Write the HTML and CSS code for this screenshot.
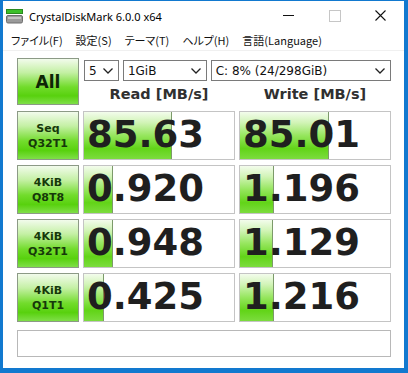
FILE: index.html
```html
<!DOCTYPE html>
<html lang="ja">
<head>
    <meta charset="UTF-8">
    <title>CrystalDiskMark 6.0.0 x64</title>
    <link rel="stylesheet" href="styles.css">
</head>
<body>
<div class="window">
    <div class="titlebar">
        <svg class="app-icon" width="17" height="15" viewBox="0 0 17 15">
            <rect x="0.5" y="0.5" width="16" height="4" fill="#3bbf2a" stroke="#2a8a1f"/>
            <rect x="0.5" y="6.5" width="16" height="7.5" rx="1.5" fill="#9a9a9a" stroke="#6f6f6f"/>
            <rect x="2" y="8" width="13" height="2" fill="#c4c4c4"/>
        </svg>
        <span class="title">CrystalDiskMark 6.0.0 x64</span>
        <div class="caption-buttons">
            <span class="cap cap-min"></span>
            <span class="cap cap-max"></span>
            <svg class="cap cap-close" width="11" height="11" viewBox="0 0 11 11">
                <path d="M0.5 0.5 L10.5 10.5 M10.5 0.5 L0.5 10.5" stroke="#111" stroke-width="1.1"/>
            </svg>
        </div>
    </div>

    <div class="menubar">
        <span class="menu-item">ファイル(F)</span>
        <span class="menu-item">設定(S)</span>
        <span class="menu-item">テーマ(T)</span>
        <span class="menu-item">ヘルプ(H)</span>
        <span class="menu-item">言語(Language)</span>
    </div>

    <div class="content">
        <div class="grid">
            <div class="btn btn-all">All</div>
            <div class="top-right">
                <div class="controls">
                    <div class="combo combo-count"><span>5</span><svg width="10" height="6" viewBox="0 0 10 6"><path d="M0.5 0.5 L5 5 L9.5 0.5" fill="none" stroke="#222" stroke-width="1.3"/></svg></div>
                    <div class="combo combo-size"><span>1GiB</span><svg width="10" height="6" viewBox="0 0 10 6"><path d="M0.5 0.5 L5 5 L9.5 0.5" fill="none" stroke="#222" stroke-width="1.3"/></svg></div>
                    <div class="combo combo-drive"><span>C: 8% (24/298GiB)</span><svg width="10" height="6" viewBox="0 0 10 6"><path d="M0.5 0.5 L5 5 L9.5 0.5" fill="none" stroke="#222" stroke-width="1.3"/></svg></div>
                </div>
                <div class="headers">
                    <div class="head">Read [MB/s]</div>
                    <div class="head">Write [MB/s]</div>
                </div>
            </div>

            <div class="btn btn-test">Seq<br>Q32T1</div>
            <div class="result"><div class="bar" style="width: 87px"></div><span class="value">85.63</span></div>
            <div class="result"><div class="bar" style="width: 88px"></div><span class="value">85.01</span></div>

            <div class="btn btn-test">4KiB<br>Q8T8</div>
            <div class="result"><div class="bar" style="width: 28px"></div><span class="value">0.920</span></div>
            <div class="result"><div class="bar" style="width: 33px"></div><span class="value">1.196</span></div>

            <div class="btn btn-test">4KiB<br>Q32T1</div>
            <div class="result"><div class="bar" style="width: 28px"></div><span class="value">0.948</span></div>
            <div class="result"><div class="bar" style="width: 32px"></div><span class="value">1.129</span></div>

            <div class="btn btn-test">4KiB<br>Q1T1</div>
            <div class="result"><div class="bar" style="width: 19px"></div><span class="value">0.425</span></div>
            <div class="result"><div class="bar" style="width: 33px"></div><span class="value">1.216</span></div>

            <div class="comment"></div>
        </div>
    </div>
</div>
</body>
</html>
```

FILE: styles.css
```css
body {
    margin: 0;
    background-color: #1279cf;
    font-family: "Noto Sans", "Noto Sans CJK JP", sans-serif;
}
.window {
    margin: 1px 4px 0 3px;
    height: 367px;
    background-color: #ffffff;
    display: flex;
    flex-direction: column;
}
.titlebar {
    height: 29px;
    display: flex;
    align-items: center;
    padding-left: 3px;
}
.app-icon {
    margin-right: 6px;
    margin-top: 2px;
}
.title {
    font-family: "Noto Sans", sans-serif;
    font-size: 11px;
    color: #000;
    margin-top: 1px;
}
.caption-buttons {
    margin-left: auto;
    display: flex;
    align-items: center;
}
.cap {
    display: block;
}
.cap-min {
    width: 11px;
    height: 1px;
    background-color: #111;
    margin-right: 35px;
}
.cap-max {
    width: 10px;
    height: 10px;
    border: 1px solid #c6c6c6;
    margin-right: 34px;
}
.cap-close {
    margin-right: 18px;
}
.menubar {
    height: 20px;
    display: flex;
    align-items: center;
    padding-left: 8px;
    border-bottom: 1px solid #f0f0f0;
    font-family: "Noto Sans CJK JP", sans-serif;
    font-feature-settings: "palt";
    font-size: 11px;
    color: #111;
}
.menu-item {
    margin-right: 13px;
}
.content {
    flex: 1;
    padding: 7px 0 0 14px;
}
.grid {
    display: grid;
    grid-template-columns: 62px 152px 152px;
    grid-template-rows: 48px repeat(4, 49px) 30px;
    column-gap: 4px;
    row-gap: 5px;
    font-family: "DejaVu Sans", Verdana, sans-serif;
}
.grid > :first-child,
.grid > .top-right {
    margin-bottom: 1px;
}
.btn {
    border: 1px solid #8c9a86;
    background: linear-gradient(to bottom, #f2fbec 0%, #c4f0a4 30%, #72dc2c 62%, #58d10e 82%, #7fdf48 100%);
    color: #16380a;
    font-weight: bold;
    display: flex;
    align-items: center;
    justify-content: center;
    text-align: center;
    box-sizing: border-box;
}
.btn-all {
    font-size: 17px;
    color: #0f2606;
}
.btn-test {
    font-size: 11px;
    line-height: 15px;
}
.top-right {
    grid-column: 2 / 4;
    display: flex;
    flex-direction: column;
}
.controls {
    display: flex;
    gap: 4px;
    margin-top: 2px;
    padding-left: 1px;
}
.combo {
    height: 21px;
    border: 1px solid #7a7a7a;
    box-sizing: border-box;
    display: flex;
    align-items: center;
    justify-content: space-between;
    padding: 0 5px 0 4px;
    font-family: "DejaVu Sans", sans-serif;
    font-size: 12px;
    color: #111;
    background-color: #fff;
}
.combo-count {
    width: 35px;
}
.combo-size {
    width: 84px;
}
.combo-drive {
    width: 181px;
}
.headers {
    flex: 1;
    display: grid;
    grid-template-columns: 152px 152px;
    column-gap: 4px;
    align-items: center;
}
.head {
    text-align: center;
    font-weight: bold;
    font-size: 14.5px;
    color: #303030;
    padding-top: 1px;
}
.result {
    position: relative;
    border: 1px solid #c4c4c4;
    box-sizing: border-box;
    background-color: #fff;
    display: flex;
    align-items: center;
    overflow: hidden;
}
.bar {
    position: absolute;
    left: 0;
    top: 0;
    bottom: 0;
    background: linear-gradient(to bottom, #f3fcec 0%, #d2f4b8 22%, #96e65e 50%, #62d418 78%, #7cdc3e 100%);
    border-right: 1px solid #7c9a6a;
}
.value {
    position: relative;
    font-size: 37px;
    font-weight: bold;
    color: #1f1f1f;
    padding-left: 3px;
    line-height: 1;
    margin-top: -3px;
}
.comment {
    grid-column: 1 / 4;
    border: 1px solid #b8b8b8;
    margin-top: 3px;
    background-color: #fff;
}
```
